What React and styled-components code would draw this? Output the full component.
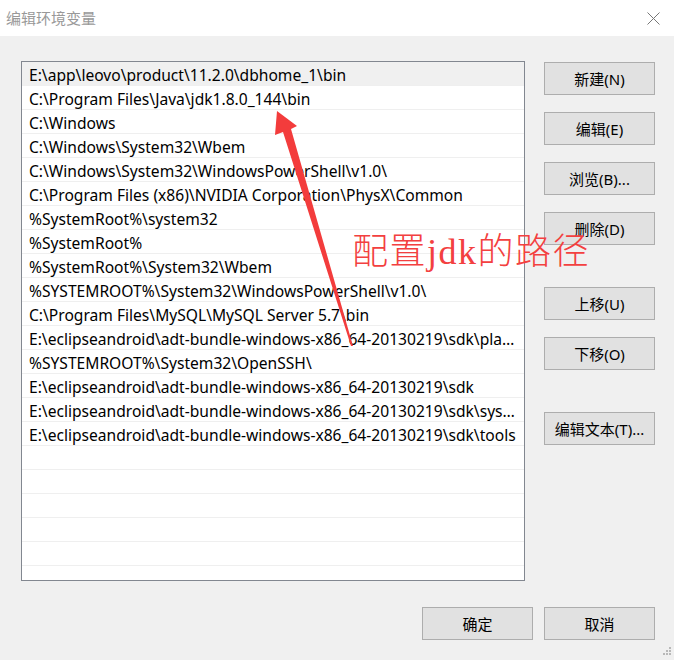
import React from "react";
import styled, { createGlobalStyle } from "styled-components";

const GlobalStyle = createGlobalStyle`
  html, body {
    margin: 0;
    padding: 0;
    background: #f0f0f0;
  }
  * {
    box-sizing: border-box;
  }
`;

const paths = [
  "E:\\app\\leovo\\product\\11.2.0\\dbhome_1\\bin",
  "C:\\Program Files\\Java\\jdk1.8.0_144\\bin",
  "C:\\Windows",
  "C:\\Windows\\System32\\Wbem",
  "C:\\Windows\\System32\\WindowsPowerShell\\v1.0\\",
  "C:\\Program Files (x86)\\NVIDIA Corporation\\PhysX\\Common",
  "%SystemRoot%\\system32",
  "%SystemRoot%",
  "%SystemRoot%\\System32\\Wbem",
  "%SYSTEMROOT%\\System32\\WindowsPowerShell\\v1.0\\",
  "C:\\Program Files\\MySQL\\MySQL Server 5.7\\bin",
  "E:\\eclipseandroid\\adt-bundle-windows-x86_64-20130219\\sdk\\platform-tools",
  "%SYSTEMROOT%\\System32\\OpenSSH\\",
  "E:\\eclipseandroid\\adt-bundle-windows-x86_64-20130219\\sdk",
  "E:\\eclipseandroid\\adt-bundle-windows-x86_64-20130219\\sdk\\system-images",
  "E:\\eclipseandroid\\adt-bundle-windows-x86_64-20130219\\sdk\\tools",
];

const EMPTY_ROWS = 6;

const Window = styled.div`
  position: relative;
  width: 674px;
  height: 660px;
  background: #f0f0f0;
  font-family: "Noto Sans", "Noto Sans CJK SC", sans-serif;
  display: flex;
  flex-direction: column;
  overflow: hidden;
`;

const TitleBar = styled.div`
  height: 36px;
  background: #fff;
  display: flex;
  align-items: center;
  justify-content: space-between;
  padding: 0 14px 0 6px;
`;

const Title = styled.div`
  font-family: "Noto Sans CJK SC", sans-serif;
  font-size: 15px;
  color: #999;
  margin-top: -1px;
`;

const Body = styled.div`
  flex: 1;
  display: flex;
  flex-direction: column;
  padding: 25px 19px 0 21px;
`;

const Main = styled.div`
  display: flex;
  gap: 19px;
`;

const ListBox = styled.div`
  width: 504px;
  height: 520px;
  border: 1px solid #828790;
  background: #fff;
  overflow: hidden;
`;

const Row = styled.div`
  height: 24px;
  line-height: 22px;
  padding: 2px 5px 0 7px;
  font-size: 15.6px;
  color: #000;
  white-space: nowrap;
  overflow: hidden;
  text-overflow: ellipsis;
  border-bottom: 1px solid #efefef;
  background: ${(p) => (p.$selected ? "#f0f0f0" : "#fff")};
`;

const SideButtons = styled.div`
  display: flex;
  flex-direction: column;
  gap: 17px;
  padding-top: 1px;
`;

const Button = styled.button`
  width: 111px;
  height: 33px;
  background: #e1e1e1;
  border: 1px solid #adadad;
  border-radius: 0;
  font-family: "Noto Sans", "Noto Sans CJK SC", sans-serif;
  font-size: 15px;
  color: #000;
  padding: 0;
  margin-top: ${(p) => (p.$spaced ? "25px" : "0")};
`;

const Footer = styled.div`
  display: flex;
  justify-content: flex-end;
  gap: 11px;
  margin-top: 26px;
`;

const CloseIcon = () => (
  <svg width="13" height="13" viewBox="0 0 13 13">
    <path d="M0.5 0.5 L12.5 12.5 M12.5 0.5 L0.5 12.5" stroke="#777" strokeWidth="1" />
  </svg>
);

const Grip = styled.svg`
  position: absolute;
  right: 2px;
  bottom: 2px;
`;

const Overlay = styled.svg`
  position: absolute;
  left: 0;
  top: 0;
  pointer-events: none;
`;

const Note = styled.div`
  position: absolute;
  left: 352px;
  top: 234px;
  font-family: "Liberation Serif", "Noto Sans CJK SC", serif;
  font-weight: 300;
  font-size: 36px;
  line-height: 36px;
  letter-spacing: 1.5px;
  color: #f34040;
  white-space: nowrap;
`;

export default function App() {
  const rows = [...paths, ...Array(EMPTY_ROWS).fill("")];
  return (
    <>
      <GlobalStyle />
      <Window>
        <TitleBar>
          <Title>编辑环境变量</Title>
          <CloseIcon />
        </TitleBar>
        <Body>
          <Main>
            <ListBox>
              {rows.map((r, i) => (
                <Row key={i} $selected={i === 0}>
                  {r}
                </Row>
              ))}
            </ListBox>
            <SideButtons>
              <Button>新建(N)</Button>
              <Button>编辑(E)</Button>
              <Button>浏览(B)...</Button>
              <Button>删除(D)</Button>
              <Button $spaced>上移(U)</Button>
              <Button>下移(O)</Button>
              <Button $spaced>编辑文本(T)...</Button>
            </SideButtons>
          </Main>
          <Footer>
            <Button>确定</Button>
            <Button>取消</Button>
          </Footer>
        </Body>
        <Overlay width="674" height="660">
          <polygon
            points="277,111 297,126 291,129 353,346 351,346 283,132 275,135"
            fill="#f33c3c"
          />
        </Overlay>
        <Note>配置jdk的路径</Note>
        <Grip width="12" height="12" viewBox="0 0 12 12">
          <g fill="#b8b8b8">
            <rect x="9" y="1" width="2" height="2" />
            <rect x="6" y="4" width="2" height="2" />
            <rect x="9" y="4" width="2" height="2" />
            <rect x="3" y="7" width="2" height="2" />
            <rect x="6" y="7" width="2" height="2" />
            <rect x="9" y="7" width="2" height="2" />
          </g>
        </Grip>
      </Window>
    </>
  );
}
